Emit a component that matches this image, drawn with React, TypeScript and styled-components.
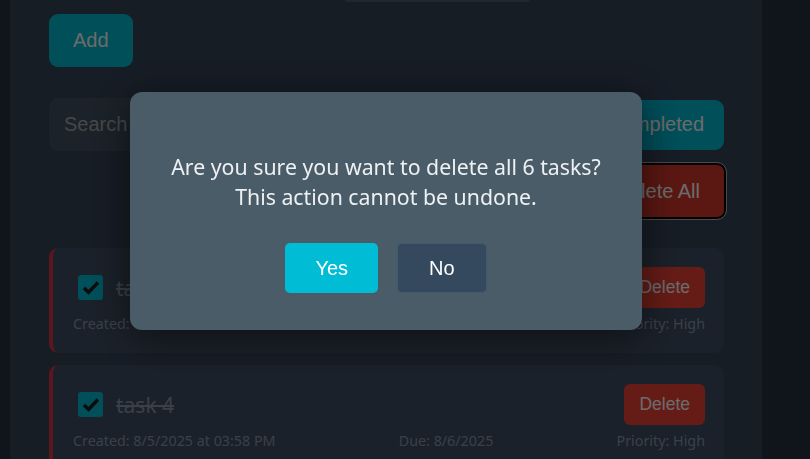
import React from "react";
import styled, { createGlobalStyle } from "styled-components";

const Global = createGlobalStyle`
  html, body { margin: 0; padding: 0; background: #283443; overflow: hidden; }
  body { font-family: "Noto Sans", "Open Sans", sans-serif; }
  * { box-sizing: border-box; }
`;

const Page = styled.div`
  display: flex;
  align-items: flex-start;
  padding-left: 10px;
  height: 459px;
  overflow: hidden;
`;

const Panel = styled.main`
  width: 752px;
  min-height: 459px;
  flex-shrink: 0;
  background: #37455a;
  padding: 0 38px 0 39px;
  display: flex;
  flex-direction: column;
  & > * { flex-shrink: 0; }
`;

const TopStub = styled.div`
  height: 2px;
  width: 185px;
  margin-left: 296px;
  background: #4f5d70;
  border-radius: 0 0 3px 3px;
`;

const AddButton = styled.button`
  margin-top: 12px;
  align-self: flex-start;
  height: 53px;
  padding: 0 24px;
  border: none;
  border-radius: 9px;
  background: #00bcd4;
  color: #fff;
  font-family: "Liberation Sans", Arial, sans-serif;
  font-size: 20px;
`;

const FilterRow = styled.div`
  margin-top: 31px;
  display: flex;
  align-items: center;
  gap: 12px;
`;

const SearchInput = styled.input`
  flex: 1;
  height: 53px;
  border: none;
  border-radius: 9px;
  background: #435162;
  padding: 0 15px;
  font-family: "Liberation Sans", Arial, sans-serif;
  font-size: 20px;
  color: #fff;
  &::placeholder { color: #a6aaae; }
`;

const FilterButton = styled.button`
  height: 50px;
  padding: 0 20px;
  border: none;
  border-radius: 9px;
  background: #00bcd4;
  color: #fff;
  font-family: "Liberation Sans", Arial, sans-serif;
  font-size: 20px;
`;

const ActionRow = styled.div`
  margin-top: 12px;
  display: flex;
  justify-content: flex-end;
  margin-right: -2px;
`;

const DeleteAllButton = styled.button`
  height: 56px;
  padding: 0 24px;
  border: 2px solid #000;
  outline: 1px solid #b0b0b0;
  outline-offset: 0;
  border-radius: 9px;
  background: #d9382c;
  color: #fff;
  font-family: "Liberation Sans", Arial, sans-serif;
  font-size: 20px;
`;

const TaskList = styled.div`
  margin-top: 29px;
  display: flex;
  flex-direction: column;
  gap: 12px;
`;

const Card = styled.div`
  background: #404f64;
  border-left: 4px solid #dc3545;
  border-radius: 9px;
  padding: 19px 19px 19px 20px;
  display: flex;
  flex-direction: column;
  gap: 6px;
  flex-shrink: 0;
`;

const TaskRow = styled.div`
  display: flex;
  align-items: center;
  height: 41px;
`;

const Check = styled.span`
  width: 25px;
  height: 25px;
  margin-left: 5px;
  border-radius: 3px;
  background: #00bcd4;
  display: flex;
  align-items: center;
  justify-content: center;
  flex-shrink: 0;
`;

const Title = styled.span<{ $done: boolean }>`
  margin-left: 13px;
  flex: 1;
  font-size: 21px;
  color: #8a98ab;
  text-decoration: ${(p) => (p.$done ? "line-through" : "none")};
`;

const DeleteButton = styled.button`
  height: 41px;
  padding: 0 15px;
  border: none;
  border-radius: 6px;
  background: #f44336;
  color: #fff;
  font-family: "Liberation Sans", Arial, sans-serif;
  font-size: 17.5px;
`;

const Meta = styled.div`
  display: flex;
  justify-content: space-between;
  font-size: 14.3px;
  line-height: 20px;
  color: #8a9aad;
`;

const Overlay = styled.div`
  position: fixed;
  inset: 0;
  background: rgba(0, 0, 0, 0.58);
  display: flex;
  justify-content: center;
  align-items: flex-start;
  padding: 92px 38px 0 0;
`;

const Modal = styled.div`
  width: 512px;
  background: #4a5c68;
  border-radius: 12px;
  padding: 60px 20px 37px;
  box-shadow: 0 6px 40px rgba(0, 0, 0, 0.55);
  text-align: center;
`;

const Message = styled.p`
  margin: 0 0 31px;
  font-size: 21.3px;
  line-height: 30px;
  color: #eef1f3;
`;

const Buttons = styled.div`
  display: flex;
  justify-content: center;
  gap: 19px;
`;

const ModalButton = styled.button<{ $primary?: boolean }>`
  height: 50px;
  padding: 0 ${(p) => (p.$primary ? "30px" : "31px")};
  border-radius: 5px;
  border: ${(p) => (p.$primary ? "none" : "1px solid #415a72")};
  background: ${(p) => (p.$primary ? "#00bcd4" : "#34495e")};
  color: #fff;
  font-family: "Liberation Sans", Arial, sans-serif;
  font-size: 20px;
`;

const CheckIcon = () => (
  <svg width="18" height="15" viewBox="0 0 18 15">
    <path d="M2 8 L6.6 12.3 L16 2.5" fill="none" stroke="#1e1e1e" strokeWidth="3.4" />
  </svg>
);

const tasks = [
  { id: 1, title: "task 5", created: "8/5/2025 at 03:59 PM", due: "8/6/2025", priority: "High" },
  { id: 2, title: "task 4", created: "8/5/2025 at 03:58 PM", due: "8/6/2025", priority: "High" },
];

export default function App() {
  return (
    <>
      <Global />
      <Page>
        <Panel>
          <TopStub />
          <AddButton>Add</AddButton>
          <FilterRow>
            <SearchInput placeholder="Search tasks..." />
            <FilterButton>All</FilterButton>
            <FilterButton>Completed</FilterButton>
          </FilterRow>
          <ActionRow>
            <DeleteAllButton>Delete All</DeleteAllButton>
          </ActionRow>
          <TaskList>
            {tasks.map((t) => (
              <Card key={t.id}>
                <TaskRow>
                  <Check>
                    <CheckIcon />
                  </Check>
                  <Title $done>{t.title}</Title>
                  <DeleteButton>Delete</DeleteButton>
                </TaskRow>
                <Meta>
                  <span>Created: {t.created}</span>
                  <span>Due: {t.due}</span>
                  <span>Priority: {t.priority}</span>
                </Meta>
              </Card>
            ))}
          </TaskList>
        </Panel>
      </Page>
      <Overlay>
        <Modal>
          <Message>
            Are you sure you want to delete all 6 tasks?
            <br />
            This action cannot be undone.
          </Message>
          <Buttons>
            <ModalButton $primary>Yes</ModalButton>
            <ModalButton>No</ModalButton>
          </Buttons>
        </Modal>
      </Overlay>
    </>
  );
}
